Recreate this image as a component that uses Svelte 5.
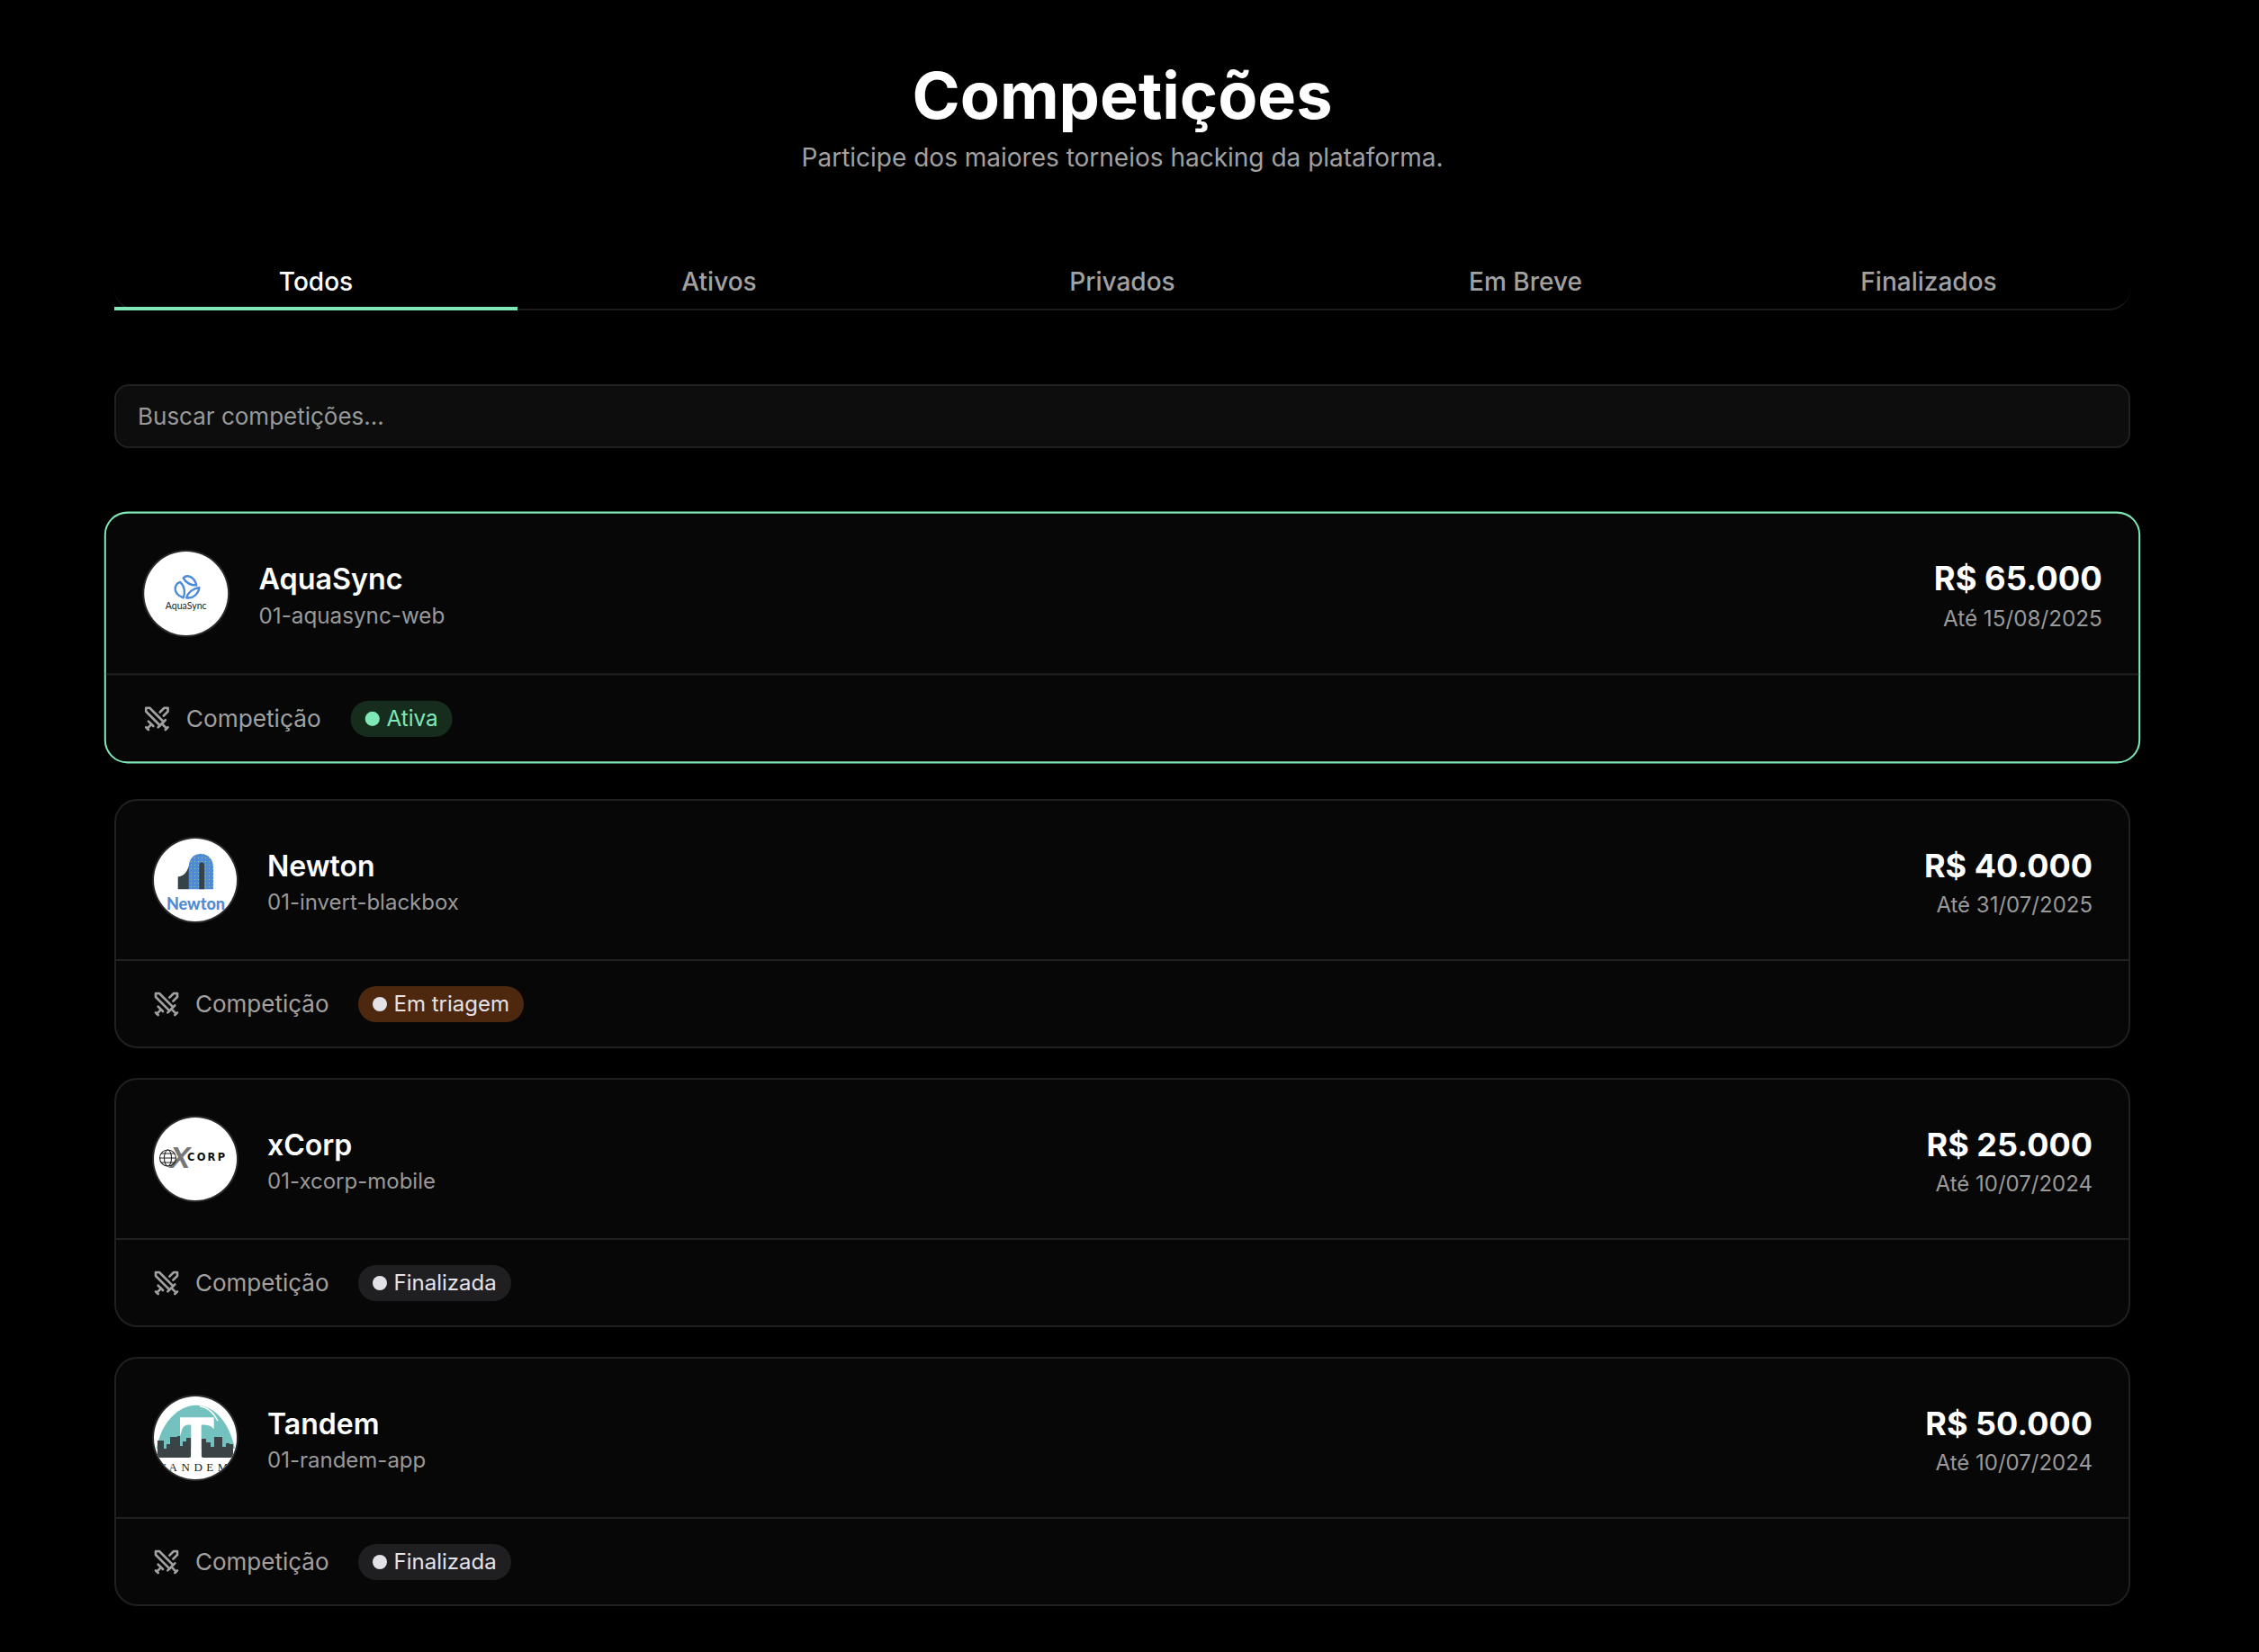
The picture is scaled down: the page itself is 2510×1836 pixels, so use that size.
<script>
	const tabs = ['Todos', 'Ativos', 'Privados', 'Em Breve', 'Finalizados'];

	const competitions = [
		{ name: 'AquaSync', slug: '01-aquasync-web', prize: 'R$ 65.000', until: 'Até 15/08/2025', status: 'Ativa', kind: 'active', logo: 'aqua', highlight: true },
		{ name: 'Newton', slug: '01-invert-blackbox', prize: 'R$ 40.000', until: 'Até 31/07/2025', status: 'Em triagem', kind: 'review', logo: 'newton' },
		{ name: 'xCorp', slug: '01-xcorp-mobile', prize: 'R$ 25.000', until: 'Até 10/07/2024', status: 'Finalizada', kind: 'done', logo: 'xcorp' },
		{ name: 'Tandem', slug: '01-randem-app', prize: 'R$ 50.000', until: 'Até 10/07/2024', status: 'Finalizada', kind: 'done', logo: 'tandem' }
	];
</script>

<main class="page">
	<div class="inner">
		<header class="head">
			<h1>Competições</h1>
			<p>Participe dos maiores torneios hacking da plataforma.</p>
		</header>

		<nav class="tabs">
			{#each tabs as tab, i}
				<button class="tab" class:current={i === 0}>{tab}</button>
			{/each}
		</nav>

		<input class="search" type="text" placeholder="Buscar competições..." />

		<div class="list">
			{#each competitions as c}
				<article class="card" class:highlight={c.highlight}>
					<div class="card-top">
						<div class="avatar">
							<svg viewBox="0 0 92 92" width="92" height="92">
								{#if c.logo === 'aqua'}
									<g fill="none" stroke="#4f8bdc" stroke-width="2.4" stroke-linejoin="round">
										<path d="M43 29C47 25 55 27 57.5 37C52 37 46 34.5 43 29Z" />
										<path d="M39.5 33.5C33 36 30.5 46 43 50.7C45.5 45 44.5 38 39.5 33.5Z" />
										<path d="M46.5 50.7C48 45 53.5 40.5 60.5 39.5C60 46 54 52 46.5 50.7Z" />
									</g>
									<text class="logo-aqua" x="46" y="63" text-anchor="middle">AquaSync</text>
								{:else if c.logo === 'newton'}
									<defs>
										<pattern id="newton-dots" width="4" height="4" patternUnits="userSpaceOnUse">
											<rect width="4" height="4" fill="#4f8bd6" />
											<circle cx="1.5" cy="1.5" r="0.5" fill="#a9d8a0" />
										</pattern>
									</defs>
									<path d="M26.7 42.5C33 42 37 37 39 30V56.3H26.7Z" fill="#36424a" />
									<path d="M38.7 56.3V32C38.7 23 44 16.7 52 16.7C60 16.7 66 23 66 32V56.3Z" fill="url(#newton-dots)" />
									<path d="M50.3 56.3V30C50.3 25 56 25 56 30V56.3Z" fill="#36424a" />
									<text class="logo-newton" x="46.5" y="79" text-anchor="middle">Newton</text>
								{:else if c.logo === 'xcorp'}
									<text class="logo-x" x="29" y="56" text-anchor="middle">X</text>
									<g fill="none" stroke="#222" stroke-width="1.1">
										<circle cx="15.5" cy="45" r="9" />
										<ellipse cx="15.5" cy="45" rx="4" ry="9" />
										<path d="M6.5 45H24.5M8 40H23M8 50H23" />
									</g>
									<text class="logo-corp" x="37" y="48">CORP</text>
								{:else}
									<defs>
										<clipPath id="tandem-clip"><circle cx="46" cy="46" r="46" /></clipPath>
									</defs>
									<g clip-path="url(#tandem-clip)">
										<path d="M3 58C8 28 28 9.7 47 9.7C68 9.7 84 30 90 58Z" fill="#74c2bf" />
										<path d="M51 10.7C60 12 67 19 71 27.3" fill="none" stroke="#fff" stroke-width="1.4" />
										<path d="M4 49H11V58H14V53H18V45H26V44H29V55H32V50H36V46H41.3V66Q41.3 68 39 68H4Z" fill="#3a4446" />
										<path d="M52.7 47H58V51H63V56H67V45H76V56H80V52H84V53H88V68H55Q52.7 68 52.7 66Z" fill="#3a4446" />
										<path d="M29 23.3H66.7V36L63 33Q60 31.5 56 31.5H52.7V69H41.3V31.5H38Q33.5 31.5 31.5 36L29 44Z" fill="#fff" />
										<text class="logo-tandem" x="46" y="83" text-anchor="middle">TANDEM</text>
									</g>
								{/if}
							</svg>
						</div>
						<div class="names">
							<h2>{c.name}</h2>
							<span>{c.slug}</span>
						</div>
						<div class="prize">
							<strong>{c.prize}</strong>
							<span>{c.until}</span>
						</div>
					</div>
					<div class="card-bottom">
						<svg class="swords" viewBox="0 0 24 24" width="32" height="32" fill="none" stroke="currentColor" stroke-width="2" stroke-linecap="round" stroke-linejoin="round">
							<polyline points="14.5 17.5 3 6 3 3 6 3 17.5 14.5" />
							<line x1="13" x2="19" y1="19" y2="13" />
							<line x1="16" x2="20" y1="16" y2="20" />
							<line x1="19" x2="21" y1="21" y2="19" />
							<polyline points="14.5 6.5 18 3 21 3 21 6 17.5 9.5" />
							<line x1="5" x2="9" y1="14" y2="18" />
							<line x1="7" x2="4" y1="17" y2="20" />
							<line x1="3" x2="5" y1="19" y2="21" />
						</svg>
						<span class="type">Competição</span>
						<span class="pill {c.kind}"><i></i>{c.status}</span>
					</div>
				</article>
			{/each}
		</div>
	</div>
</main>

<style>
	:global(body) {
		background: #000;
		font-family: Inter, 'Liberation Sans', sans-serif;
		color: #fff;
	}

	.page {
		width: 2494px;
		padding-top: 66px;
		padding-bottom: 50px;
	}

	.inner {
		width: 2240px;
		margin: 0 auto;
	}

	.head {
		text-align: center;
		margin-bottom: 85px;
	}

	h1 {
		margin: 0;
		font-size: 72px;
		line-height: 80px;
		font-weight: 700;
	}

	.head p {
		margin: 8px 0 0;
		font-size: 28px;
		line-height: 42px;
		color: #a1a1a1;
	}

	.tabs {
		display: flex;
		border-bottom: 2px solid #1a1a1a;
		border-radius: 24px;
		margin-bottom: 82px;
	}

	.tab {
		flex: 1;
		height: 64px;
		padding: 4px 0 0;
		background: none;
		border: 0;
		margin-bottom: -2px;
		border-bottom: 4px solid transparent;
		font: 500 28px Inter, sans-serif;
		color: #a1a1a1;
	}

	.tab.current {
		color: #fff;
		border-bottom-color: #7fe8b7;
	}

	.search {
		display: block;
		box-sizing: border-box;
		width: 100%;
		height: 71px;
		padding: 0 24px;
		background: #0d0d0d;
		border: 2px solid #202020;
		border-radius: 16px;
		font: 400 26px Inter, sans-serif;
		color: #fff;
		outline: none;
	}

	.search::placeholder {
		color: #999;
		opacity: 1;
	}

	.list {
		display: flex;
		flex-direction: column;
		gap: 33px;
		margin-top: 80px;
	}

	.card {
		background: #070707;
		border: 2px solid #202020;
		border-radius: 25.6px;
	}

	.card.highlight {
		border-color: #7fe8b7;
		transform: translateY(-8px) scale(1.01);
	}

	.card-top {
		display: flex;
		align-items: center;
		height: 176px;
		padding: 0 40px 0 42px;
		border-bottom: 2px solid #202020;
	}

	.avatar {
		flex-shrink: 0;
		width: 92px;
		height: 92px;
		border-radius: 50%;
		background: #fff;
		box-shadow: 0 0 0 2px #2a2a2a;
		overflow: hidden;
	}

	.avatar svg {
		display: block;
	}

	.logo-aqua {
		font: 400 10.5px Lato, sans-serif;
		fill: #222;
	}

	.logo-newton {
		font: 900 18px Lato, sans-serif;
		fill: #4f8bd6;
	}

	.logo-x {
		font: italic 900 34px 'Liberation Sans', sans-serif;
		fill: #777;
	}

	.logo-corp {
		font: 700 11.5px 'DejaVu Sans', sans-serif;
		letter-spacing: 2.2px;
		fill: #111;
	}

	.logo-tandem {
		font: 400 13px 'Liberation Serif', serif;
		letter-spacing: 4.5px;
		fill: #222;
	}

	.names {
		display: flex;
		flex-direction: column;
		gap: 4px;
		margin-left: 34px;
		padding-top: 5px;
	}

	h2 {
		margin: 0;
		font-size: 32px;
		line-height: 40px;
		font-weight: 600;
	}

	.names span {
		font-size: 24px;
		line-height: 32px;
		color: #999;
	}

	.prize {
		display: flex;
		flex-direction: column;
		align-items: flex-end;
		gap: 5px;
		margin-left: auto;
		padding-top: 7px;
	}

	.prize strong {
		font-size: 36px;
		line-height: 44px;
		font-weight: 700;
	}

	.prize span {
		font-size: 24px;
		line-height: 34px;
		color: #999;
	}

	.card-bottom {
		display: flex;
		align-items: center;
		height: 95px;
		padding: 0 40px;
		color: #a1a1a1;
	}

	.swords {
		margin-right: 16px;
		flex-shrink: 0;
	}

	.type {
		font-size: 26px;
		margin-right: 32px;
	}

	.pill {
		display: inline-flex;
		align-items: center;
		gap: 8px;
		height: 40px;
		padding: 0 16px;
		border-radius: 20px;
		font-size: 24px;
		color: #e2e2e8;
	}

	.pill i {
		width: 16px;
		height: 16px;
		border-radius: 50%;
		background: currentColor;
	}

	.pill.active {
		background: #162c1c;
		color: #7fe8b7;
	}

	.pill.review {
		background: #4d280e;
	}

	.pill.done {
		background: #1f1f22;
	}
</style>
